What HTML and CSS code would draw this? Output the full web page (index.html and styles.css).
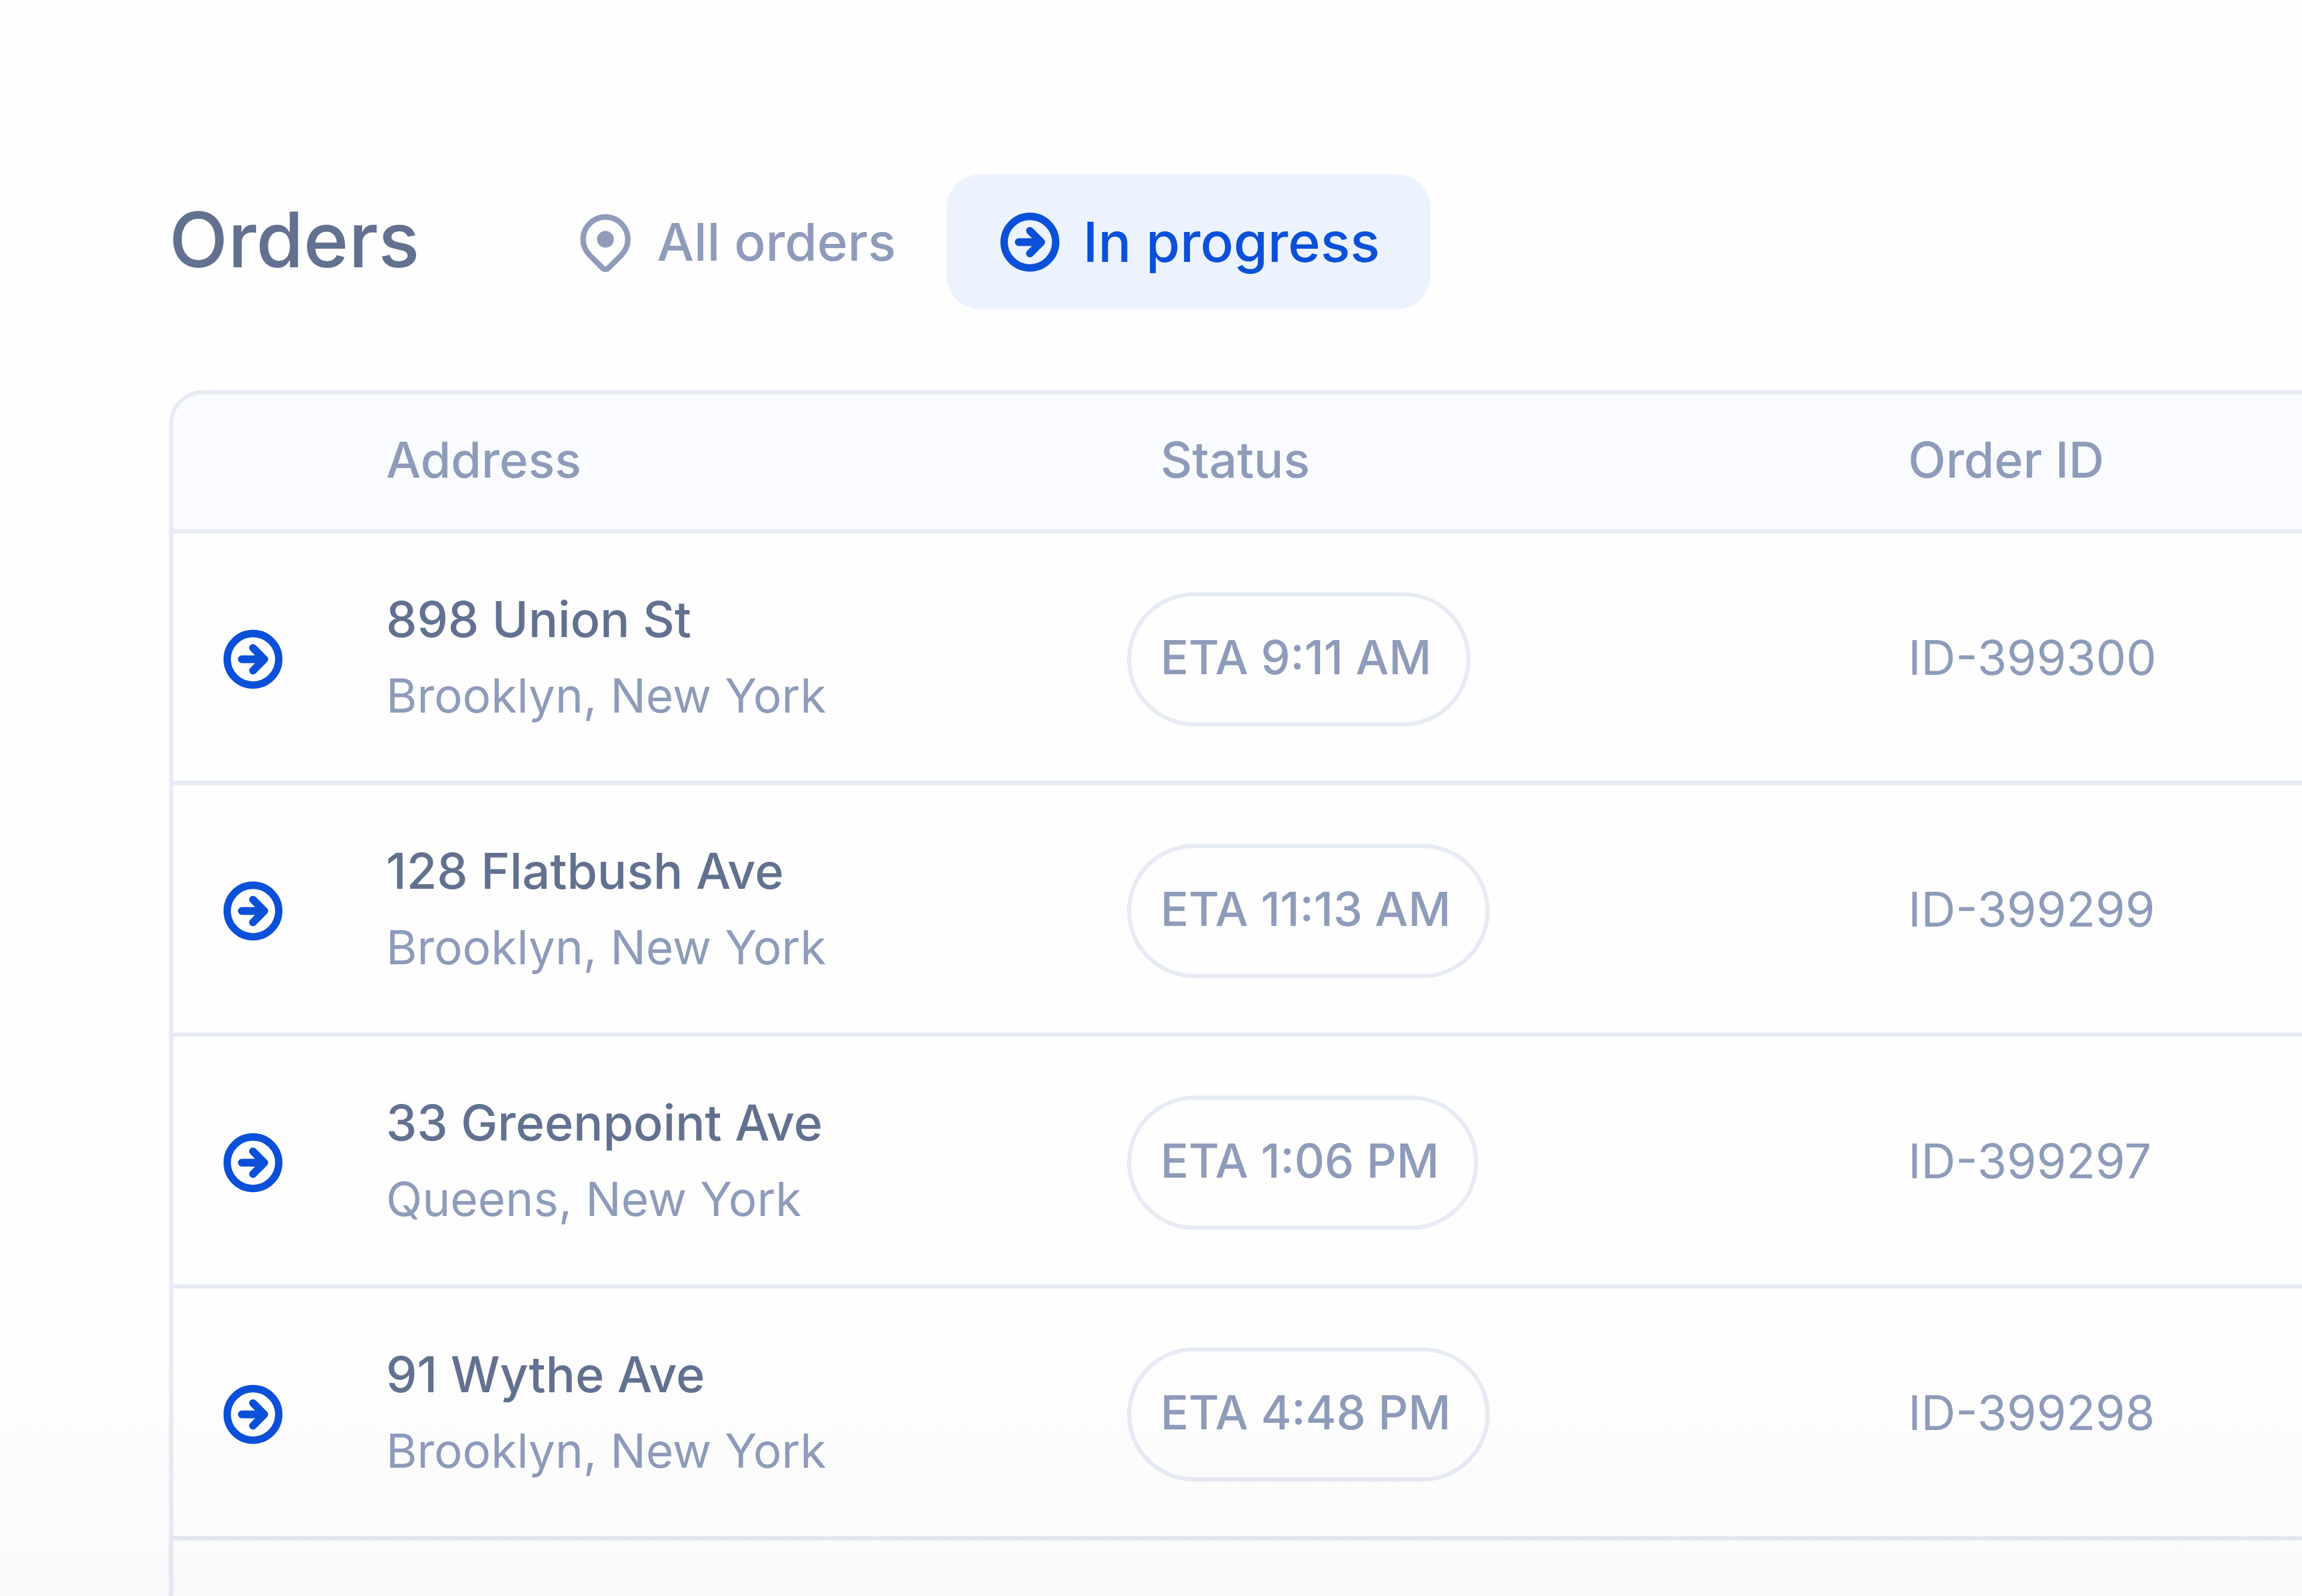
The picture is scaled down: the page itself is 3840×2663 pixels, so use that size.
FILE: index.html
```html
<!DOCTYPE html>
<html lang="en">
<head>
    <meta charset="UTF-8">
    <meta name="viewport" content="width=device-width, initial-scale=1.0">
    <title>Orders</title>
    <link rel="stylesheet" href="styles.css">
</head>
<body>

    <!-- Shared icon shapes -->
    <svg class="sprite" aria-hidden="true">
        <symbol id="icon-arrow" viewBox="0 0 24 24">
            <circle cx="12" cy="12" r="8.75" fill="none" stroke="currentColor" stroke-width="2.5"/>
            <path d="M8.2 12H15.8M12 8.15L15.85 12L12 15.85" fill="none" stroke="currentColor" stroke-width="2.6" stroke-linecap="round" stroke-linejoin="round"/>
        </symbol>
        <symbol id="icon-pin" viewBox="0 0 24 24">
            <path d="M6.34 16.66A8 8 0 1 1 17.66 16.66L13.06 21.25A1.5 1.5 0 0 1 10.94 21.25Z" fill="none" stroke="currentColor" stroke-width="2"/>
            <circle cx="12" cy="11" r="3" fill="currentColor"/>
        </symbol>
    </svg>

    <main class="page">
        <!-- Title and filters -->
        <header class="toolbar">
            <h1>Orders</h1>
            <nav class="tabs">
                <button type="button" class="tab">
                    <svg class="pin"><use href="#icon-pin"/></svg>
                    <span>All orders</span>
                </button>
                <button type="button" class="tab active">
                    <svg class="arrow"><use href="#icon-arrow"/></svg>
                    <span>In progress</span>
                </button>
            </nav>
        </header>

        <!-- Orders list -->
        <div class="panel">
            <table class="orders">
                <thead>
                    <tr>
                        <th class="col-icon"></th>
                        <th class="col-address">Address</th>
                        <th class="col-status">Status</th>
                        <th class="col-id">Order ID</th>
                    </tr>
                </thead>
                <tbody>
                    <tr>
                        <td class="state"><svg class="arrow"><use href="#icon-arrow"/></svg></td>
                        <td><div class="street">898 Union St</div><div class="city">Brooklyn, New York</div></td>
                        <td class="status"><span class="eta">ETA 9:11 AM</span></td>
                        <td>ID-399300</td>
                    </tr>
                    <tr>
                        <td class="state"><svg class="arrow"><use href="#icon-arrow"/></svg></td>
                        <td><div class="street">128 Flatbush Ave</div><div class="city">Brooklyn, New York</div></td>
                        <td class="status"><span class="eta">ETA 11:13 AM</span></td>
                        <td>ID-399299</td>
                    </tr>
                    <tr>
                        <td class="state"><svg class="arrow"><use href="#icon-arrow"/></svg></td>
                        <td><div class="street">33 Greenpoint Ave</div><div class="city">Queens, New York</div></td>
                        <td class="status"><span class="eta">ETA 1:06 PM</span></td>
                        <td>ID-399297</td>
                    </tr>
                    <tr>
                        <td class="state"><svg class="arrow"><use href="#icon-arrow"/></svg></td>
                        <td><div class="street">91 Wythe Ave</div><div class="city">Brooklyn, New York</div></td>
                        <td class="status"><span class="eta">ETA 4:48 PM</span></td>
                        <td>ID-399298</td>
                    </tr>
                </tbody>
            </table>
        </div>
    </main>

</body>
</html>
```
FILE: styles.css
```css
* {
    box-sizing: border-box;
}

body {
    margin: 0;
    font-family: Inter, "Liberation Sans", sans-serif;
    color: #8e9cba;
    background-color: #fefefe;
}

.sprite {
    display: none;
}

.page {
    position: relative;
    display: flex;
    flex-direction: column;
    min-height: 100vh;
    padding: 291px 0 0 282px;
}

/* Soft shade at the bottom of the page */
.page::after {
    content: "";
    position: absolute;
    left: 0;
    right: 0;
    bottom: 0;
    height: 420px;
    background: linear-gradient(rgba(0, 10, 30, 0), rgba(0, 10, 30, 0.02));
    pointer-events: none;
}

/* Title and filters */
.toolbar {
    display: flex;
    align-items: center;
    gap: 174px;
    margin-bottom: 135px;
}

h1 {
    margin: 0;
    padding-bottom: 8px;
    font-size: 128px;
    font-weight: 500;
    line-height: 160px;
    color: #62718f;
}

.tabs {
    display: flex;
}

.tab {
    display: flex;
    align-items: center;
    gap: 30px;
    height: 225px;
    padding: 0 84px 0 80px;
    border: 0;
    border-radius: 56px;
    background: none;
    color: inherit;
    font: 500 87px Inter, "Liberation Sans", sans-serif;
    cursor: pointer;
}

.tab.active {
    background-color: #ecf3fe;
    color: #0b50d9;
    font-size: 92px;
}

.pin {
    width: 112px;
    height: 112px;
}

.arrow {
    display: block;
    width: 118px;
    height: 118px;
    color: #0b50d9;
}

/* Orders list */
.panel {
    flex: 1;
    overflow: hidden;
    border-top: 7px solid #e7ebf4;
    border-left: 7px solid #e7ebf4;
    border-top-left-radius: 56px;
}

.orders {
    width: 100%;
    table-layout: fixed;
    border-spacing: 0;
}

.orders th {
    height: 232px;
    padding: 0 0 6px;
    border-bottom: 7px solid #e7ebf4;
    background-color: #fafbff;
    font-size: 82px;
    font-weight: 500;
    text-align: left;
}

.orders td {
    height: 420px;
    padding: 0;
    border-bottom: 7px solid #e7ebf4;
    font-size: 80px;
}

.col-icon {
    width: 10%;
}

.col-address {
    width: 34.8%;
}

.col-status {
    width: 36.7%;
}

.orders .col-status {
    padding-left: 56px;
}

.orders .state {
    padding: 6px 0 0 74px;
}

.orders .status {
    padding-top: 6px;
}

.street,
.city {
    line-height: 126px;
}

.street {
    font-size: 82px;
    font-weight: 500;
    color: #62718f;
}

.orders .city {
    font-size: 79px;
}

.eta {
    display: flex;
    align-items: center;
    width: fit-content;
    height: 224px;
    padding: 0 58px 6px 49px;
    border: 7px solid #e7ebf4;
    border-radius: 112px;
    font-size: 78px;
    font-weight: 500;
}
```
